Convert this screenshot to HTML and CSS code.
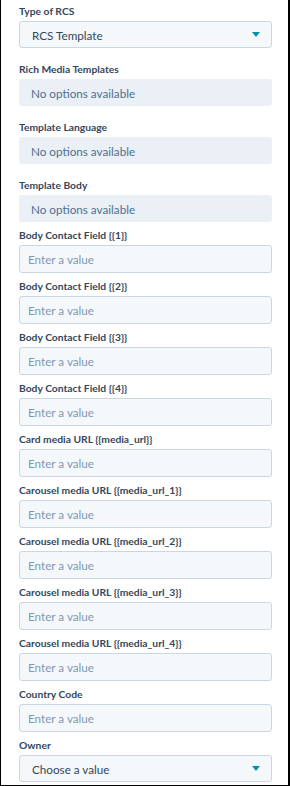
FILE: index.html
```html
<!DOCTYPE html>
<html>
<head>
<meta charset="utf-8">
<link rel="stylesheet" href="styles.css">
</head>
<body>
<div class="panel">
  <div class="field field-top">
    <label class="label">Type of RCS</label>
    <div class="select"><span class="select-text">RCS Template</span><span class="caret"></span></div>
  </div>
  <div class="field field-top">
    <label class="label">Rich Media Templates</label>
    <div class="disabled">No options available</div>
  </div>
  <div class="field field-top">
    <label class="label">Template Language</label>
    <div class="disabled">No options available</div>
  </div>
  <div class="field">
    <label class="label">Template Body</label>
    <div class="disabled">No options available</div>
  </div>
  <div class="field">
    <label class="label">Body Contact Field {{1}}</label>
    <div class="input">Enter a value</div>
  </div>
  <div class="field">
    <label class="label">Body Contact Field {{2}}</label>
    <div class="input">Enter a value</div>
  </div>
  <div class="field">
    <label class="label">Body Contact Field {{3}}</label>
    <div class="input">Enter a value</div>
  </div>
  <div class="field">
    <label class="label">Body Contact Field {{4}}</label>
    <div class="input">Enter a value</div>
  </div>
  <div class="field">
    <label class="label">Card media URL {{media_url}}</label>
    <div class="input">Enter a value</div>
  </div>
  <div class="field">
    <label class="label">Carousel media URL {{media_url_1}}</label>
    <div class="input">Enter a value</div>
  </div>
  <div class="field">
    <label class="label">Carousel media URL {{media_url_2}}</label>
    <div class="input">Enter a value</div>
  </div>
  <div class="field">
    <label class="label">Carousel media URL {{media_url_3}}</label>
    <div class="input">Enter a value</div>
  </div>
  <div class="field">
    <label class="label">Carousel media URL {{media_url_4}}</label>
    <div class="input">Enter a value</div>
  </div>
  <div class="field">
    <label class="label">Country Code</label>
    <div class="input">Enter a value</div>
  </div>
  <div class="field">
    <label class="label">Owner</label>
    <div class="select"><span class="select-text">Choose a value</span><span class="caret"></span></div>
  </div>
</div>
</body>
</html>
```

FILE: styles.css
```css
html, body {
  margin: 0;
  padding: 0;
  background: #ffffff;
}
.panel {
  box-sizing: border-box;
  width: 290px;
  height: 786px;
  overflow: hidden;
  border-left: 1px solid #000;
  border-right: 2px solid #000;
  border-bottom: 1px solid #000;
  padding: 3px 16px 0 18px;
  display: flex;
  flex-direction: column;
  gap: 5px;
  font-family: "Lato", "Liberation Sans", sans-serif;
  color: #33475b;
}
.field {
  display: flex;
  flex-direction: column;
  flex-shrink: 0;
}
.field-top {
  margin-bottom: 8px;
}
.label {
  font-size: 10.3px;
  font-weight: 700;
  line-height: 16px;
  height: 16px;
  margin-bottom: 2px;
  white-space: nowrap;
}
.select, .disabled, .input {
  box-sizing: border-box;
  height: 27px;
  border-radius: 3px;
  display: flex;
  align-items: center;
  font-size: 11.7px;
  white-space: nowrap;
}
.select {
  background: #f5f8fa;
  border: 1px solid #cbd6e2;
  padding: 0 10px 0 12px;
  justify-content: space-between;
  color: #33475b;
}
.disabled {
  background: #eaf0f6;
  padding: 0 12px;
  color: #516f90;
}
.input {
  height: 28px;
  background: #f5f8fa;
  border: 1px solid #cbd6e2;
  padding: 0 8px;
  color: #7c98b6;
}
.caret {
  width: 0;
  height: 0;
  border-left: 4.5px solid transparent;
  border-right: 4.5px solid transparent;
  border-top: 5px solid #0091ae;
  margin-right: 1px;
}
```
